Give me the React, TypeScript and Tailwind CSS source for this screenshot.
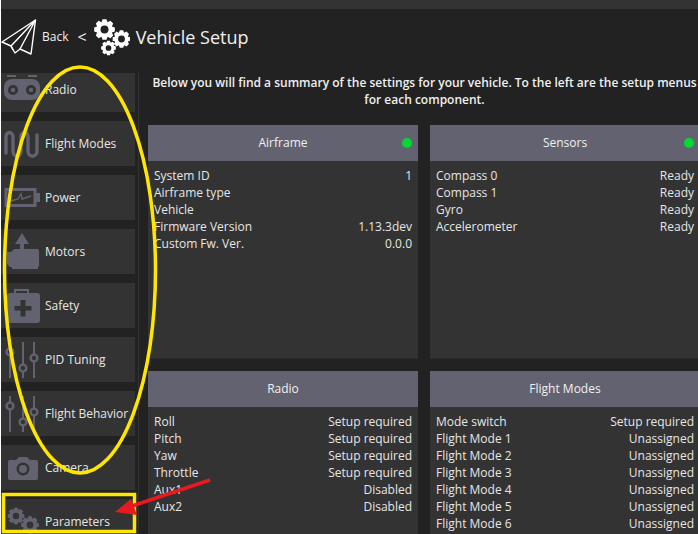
import type { ReactNode } from "react"

const iconColor = "#636270"

function gearPath(cx: number, cy: number, outer: number, inner: number, teeth: number) {
  const pts: string[] = []
  const step = (Math.PI * 2) / teeth
  for (let i = 0; i < teeth; i++) {
    const a = i * step
    const list: [number, number][] = [
      [inner, a - step * 0.5],
      [outer, a - step * 0.24],
      [outer, a + step * 0.24],
      [inner, a + step * 0.5],
    ]
    for (const [r, t] of list) {
      pts.push(`${(cx + r * Math.cos(t)).toFixed(2)} ${(cy + r * Math.sin(t)).toFixed(2)}`)
    }
  }
  return `M${pts.join("L")}Z`
}

function Gear({ cx, cy, r, teeth, hole }: { cx: number; cy: number; r: number; teeth: number; hole: string }) {
  return (
    <g>
      <path d={gearPath(cx, cy, r, r * 0.76, teeth)} fill="currentColor" />
      <circle cx={cx} cy={cy} r={r * 0.38} fill={hole} />
    </g>
  )
}

function PlaneIcon() {
  return (
    <svg width="36" height="37" viewBox="0 0 36 37" fill="none" stroke="white" strokeWidth="1.4" strokeLinejoin="round" className="shrink-0">
      <path d="M34.500 1 L1 23 L10 27 L14 34 L19 30 L30 35 Z" />
      <path d="M34.500 1 L10 27 L12 31 M34.500 1 L19 30" />
    </svg>
  )
}

function HeaderGears() {
  return (
    <svg width="36" height="37" viewBox="0 0 36 37" className="shrink-0 text-white">
      <Gear cx={10.5} cy={10.5} r={10.5} teeth={8} hole="#222222" />
      <Gear cx={27.5} cy={20} r={9} teeth={8} hole="#222222" />
      <Gear cx={14.5} cy={29} r={7.5} teeth={8} hole="#222222" />
    </svg>
  )
}

function RadioIcon() {
  return (
    <svg width="40" height="30" viewBox="0 0 40 30">
      <path d="M5 0h9v2H5zM26 0h9v2H26z" fill={iconColor} />
      <rect x="2" y="4" width="36" height="21" rx="8" fill={iconColor} />
      <circle cx="11" cy="15" r="5" fill="#333333" />
      <circle cx="11" cy="15" r="2.200" fill={iconColor} />
      <circle cx="29" cy="15" r="5" fill="#333333" />
      <circle cx="29" cy="15" r="2.200" fill={iconColor} />
    </svg>
  )
}

function ModesIcon() {
  return (
    <svg width="40" height="30" viewBox="0 0 40 30" fill="none" stroke={iconColor} strokeWidth="3.4" strokeLinecap="round">
      <path d="M4 24V8c0-6 7-6 7 0v14c0 7 8 7 8 0V8c0-6 7-6 7 0v14c0 7 9 7 9 0V6" />
    </svg>
  )
}

function PowerIcon() {
  return (
    <svg width="40" height="30" viewBox="0 0 40 30" fill="none">
      <rect x="4" y="6.500" width="29" height="16" stroke={iconColor} strokeWidth="3" />
      <rect x="34" y="10" width="4" height="9" fill={iconColor} />
      <path d="M9 18l7-2 3-5 1 5 9-3" stroke={iconColor} strokeWidth="1.4" />
    </svg>
  )
}

function MotorsIcon() {
  return (
    <svg width="40" height="38" viewBox="0 0 40 38" fill={iconColor}>
      <path d="M20 0l7 11h-5v5h-4v-5h-5z" />
      <path d="M5 19h4l3-3h24l1 2v15l-1 1v2l-26 0v-2H8l-3-3z" />
    </svg>
  )
}

function SafetyIcon() {
  return (
    <svg width="40" height="36" viewBox="0 0 40 36">
      <path d="M13 7V2h13v5" fill="none" stroke={iconColor} strokeWidth="2" />
      <rect x="5" y="5" width="33" height="30" rx="3" fill={iconColor} />
      <path d="M18.500 12h5v6h6v4.500h-6v6h-5v-6h-6V18h6z" fill="#333333" />
    </svg>
  )
}

function SlidersIcon() {
  const sliders: [number, number][] = [
    [8, 10],
    [21, 26],
    [32, 16],
  ]
  return (
    <svg width="40" height="36" viewBox="0 0 40 36" fill="none" stroke={iconColor}>
      {sliders.map(([x, y]) => (
        <g key={x}>
          <path d={`M${x} 0V36`} strokeWidth="2" />
          <circle cx={x} cy={y} r="3.400" fill="#333333" strokeWidth="2.400" />
        </g>
      ))}
    </svg>
  )
}

function CameraIcon() {
  return (
    <svg width="40" height="24" viewBox="0 0 40 24">
      <path d="M8 4h6l3-3h8l3 3h6a2 2 0 0 1 2 2v16a2 2 0 0 1-2 2H8a2 2 0 0 1-2-2V6a2 2 0 0 1 2-2z" fill={iconColor} />
      <circle cx="21" cy="13" r="6.500" fill="#333333" />
      <circle cx="21" cy="13" r="4" fill={iconColor} />
    </svg>
  )
}

function ParamsIcon() {
  return (
    <svg width="40" height="34" viewBox="0 0 40 34" className="mt-[2px]" style={{ color: iconColor }}>
      <Gear cx={14} cy={10} r={8.500} teeth={8} hole="#333333" />
      <Gear cx={28} cy={19} r={9} teeth={8} hole="#333333" />
    </svg>
  )
}

function NavItem({ label, icon }: { label: string; icon: ReactNode }) {
  return (
    <div className="flex h-[45px] shrink-0 items-center overflow-hidden bg-[#333333] pl-[1px]">
      <div className="flex w-[43px] shrink-0 justify-start">{icon}</div>
      <span className="text-[12px] leading-[17px] text-[#e6e6e6]">{label}</span>
    </div>
  )
}

function Panel({ title, ok, rows, tall }: { title: string; ok?: boolean; rows: [string, string][]; tall?: boolean }) {
  return (
    <div className={`w-[270px] shrink-0 overflow-hidden border-b border-[#2b2b2b] bg-[#333333] ${tall ? "h-[234px]" : "h-[180px]"}`}>
      <div className="relative flex h-[36px] items-center justify-center bg-[#636270] text-[12px] text-[#f0f0f0]">
        {title}
        {ok && <div className="absolute right-[6px] top-[13px] size-[10px] rounded-full bg-[#00d932]" />}
      </div>
      <div className="px-[6px] pt-[6px]">
        {rows.map(([k, v]) => (
          <div key={k} className="flex h-[17px] justify-between text-[12px] leading-[17px] text-[#e6e6e6]">
            <span>{k}</span>
            <span>{v}</span>
          </div>
        ))}
      </div>
    </div>
  )
}

export default function App() {
  return (
    <div className="relative h-[534px] w-[698px] overflow-hidden bg-white pl-px font-['Open_Sans',sans-serif]">
      <div className="flex h-full flex-col bg-[#222222]">
        <div className="h-[9px] shrink-0 bg-[#333333]" />
        <div className="flex h-[64px] shrink-0 items-center pb-[8px]">
          <PlaneIcon />
          <span className="ml-[5px] text-[12px] text-[#f0f0f0]">Back</span>
          <span className="ml-[9px] text-[16px] text-[#f0f0f0]">&lt;</span>
          <div className="ml-[7px] mt-[1px]"><HeaderGears /></div>
          <span className="ml-[6px] mt-[1px] text-[18px] text-[#f0f0f0]">Vehicle Setup</span>
        </div>
        <div className="flex min-h-0 flex-1">
          <div className="w-[138px] shrink-0 overflow-hidden border-r border-[#333333] pr-[3px]">
            <div className="mt-[-6px] flex flex-col gap-[9px]">
              <NavItem label="Radio" icon={<RadioIcon />} />
              <NavItem label="Flight Modes" icon={<ModesIcon />} />
              <NavItem label="Power" icon={<PowerIcon />} />
              <NavItem label="Motors" icon={<MotorsIcon />} />
              <NavItem label="Safety" icon={<SafetyIcon />} />
              <NavItem label="PID Tuning" icon={<SlidersIcon />} />
              <NavItem label="Flight Behavior" icon={<SlidersIcon />} />
              <NavItem label="Camera" icon={<CameraIcon />} />
              <NavItem label="Parameters" icon={<ParamsIcon />} />
            </div>
          </div>
          <div className="w-[562px] shrink-0 pl-[9px]">
            <p className="pt-[1px] text-center text-[12px] font-semibold leading-[17px] text-[#f0f0f0]">
              Below you will find a summary of the settings for your vehicle. To the left are the setup menus for each component.
            </p>
            <div className="mt-[17px] grid grid-cols-[270px_270px] gap-[12px]">
              <Panel
                title="Airframe"
                ok
                tall
                rows={[
                  ["System ID", "1"],
                  ["Airframe type", ""],
                  ["Vehicle", ""],
                  ["Firmware Version", "1.13.3dev"],
                  ["Custom Fw. Ver.", "0.0.0"],
                ]}
              />
              <Panel
                title="Sensors"
                ok
                tall
                rows={[
                  ["Compass 0", "Ready"],
                  ["Compass 1", "Ready"],
                  ["Gyro", "Ready"],
                  ["Accelerometer", "Ready"],
                ]}
              />
              <Panel
                title="Radio"
                rows={[
                  ["Roll", "Setup required"],
                  ["Pitch", "Setup required"],
                  ["Yaw", "Setup required"],
                  ["Throttle", "Setup required"],
                  ["Aux1", "Disabled"],
                  ["Aux2", "Disabled"],
                ]}
              />
              <Panel
                title="Flight Modes"
                rows={[
                  ["Mode switch", "Setup required"],
                  ["Flight Mode 1", "Unassigned"],
                  ["Flight Mode 2", "Unassigned"],
                  ["Flight Mode 3", "Unassigned"],
                  ["Flight Mode 4", "Unassigned"],
                  ["Flight Mode 5", "Unassigned"],
                  ["Flight Mode 6", "Unassigned"],
                ]}
              />
            </div>
          </div>
        </div>
      </div>
      {/* hand-drawn annotations on top of the screenshot */}
      <svg width="698" height="534" viewBox="0 0 698 534" fill="none" className="pointer-events-none absolute left-0 top-0">
        <ellipse cx="80" cy="270" rx="75.500" ry="203" stroke="#ffe600" strokeWidth="3.500" />
        <rect x="3.500" y="494.500" width="131" height="37" stroke="#ffe600" strokeWidth="3.500" />
        <path d="M210 480L132 506" stroke="#e8191f" strokeWidth="3.500" />
        <path d="M115 512L131 499L137 515Z" fill="#e8191f" />
      </svg>
    </div>
  )
}
